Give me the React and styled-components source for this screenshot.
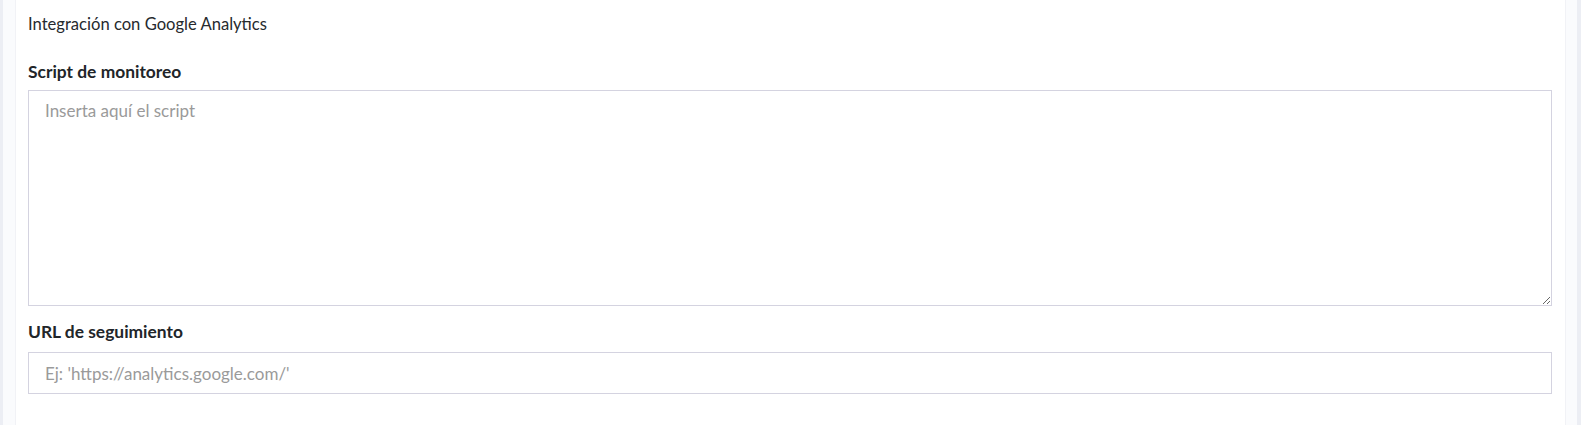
import React, { useState } from "react";
import styled, { createGlobalStyle } from "styled-components";

const GlobalStyle = createGlobalStyle`
    html, body {
        margin: 0;
        padding: 0;
        background: #fafbfd;
    }
    body {
        font-family: "Source Sans Pro", Lato, "Liberation Sans", sans-serif;
        color: #212529;
    }
`;

const App = () => {
    const [script, setScript] = useState("");
    const [url, setUrl] = useState("");

    return (
        <>
            <GlobalStyle />
            <Page>
                <EdgeStrip />
                <Card>
                    <Heading>Integración con Google Analytics</Heading>
                    <Field>
                        <Label>Script de monitoreo</Label>
                        <ScriptInput
                            placeholder="Inserta aquí el script"
                            value={script}
                            onChange={(e) => setScript(e.target.value)}
                        />
                    </Field>
                    <Field>
                        <Label>URL de seguimiento</Label>
                        <UrlInput
                            type="text"
                            placeholder="Ej: 'https://analytics.google.com/'"
                            value={url}
                            onChange={(e) => setUrl(e.target.value)}
                        />
                    </Field>
                </Card>
                <EdgeStrip $right />
            </Page>
        </>
    );
};

const Page = styled.div`
    display: flex;
    min-height: 100vh;
    background: #fafbfd;
`;

const EdgeStrip = styled.div`
    width: ${(p) => (p.$right ? "4px" : "3px")};
    flex-shrink: 0;
    background: #eceef4;
    margin-left: ${(p) => (p.$right ? "11px" : "0")};
    margin-right: ${(p) => (p.$right ? "0" : "12px")};
`;

const Card = styled.div`
    flex: 1;
    display: flex;
    flex-direction: column;
    background: #ffffff;
    border-left: 1px solid #f1f2f6;
    border-right: 1px solid #f1f2f6;
    padding: 12px 13px 0 12px;
`;

const Heading = styled.div`
    font-size: 16.6px;
    line-height: 24px;
    color: #262a2e;
    margin-bottom: 24px;
`;

const Field = styled.div`
    display: flex;
    flex-direction: column;
    margin-bottom: 14px;
`;

const Label = styled.label`
    font-size: 17.4px;
    font-weight: 700;
    line-height: 24px;
    color: #212529;
    margin-bottom: 6px;
`;

const ScriptInput = styled.textarea`
    box-sizing: border-box;
    width: 100%;
    height: 216px;
    padding: 8px 16px;
    border: 1px solid #d4d3e0;
    border-radius: 0;
    font-family: inherit;
    font-size: 17px;
    line-height: 24px;
    color: #212529;
    outline: none;
    &::placeholder {
        color: #9a9a9a;
    }
`;

const UrlInput = styled.input`
    box-sizing: border-box;
    width: 100%;
    height: 42px;
    margin-top: 2px;
    padding: 0 16px;
    border: 1px solid #d4d3e0;
    border-radius: 0;
    font-family: inherit;
    font-size: 17px;
    color: #212529;
    outline: none;
    &::placeholder {
        color: #9a9a9a;
    }
`;

export default App;
